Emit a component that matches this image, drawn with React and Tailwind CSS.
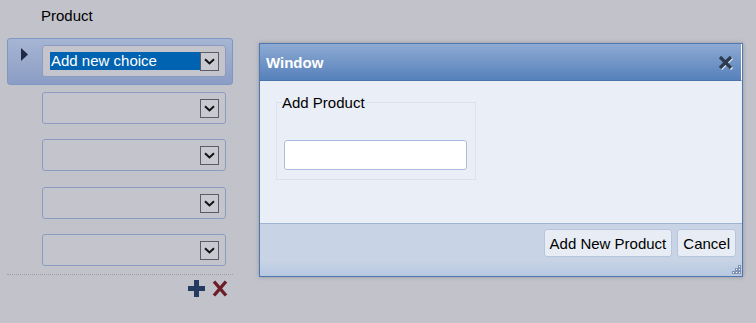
import React from "react";

const Chevron = () => (
  <svg width="11" height="7" viewBox="0 0 11 7">
    <path d="M1 1.2 L5.5 5.4 L10 1.2" fill="none" stroke="#111" strokeWidth="2" />
  </svg>
);

const DropButton = () => (
  <div className="w-[19px] h-[19px] border border-[#5c5c64] bg-[#c9c9d1] flex items-center justify-center shrink-0">
    <Chevron />
  </div>
);

const ChoiceSelect = ({ value }) => (
  <div className="w-[184px] h-[32px] border border-[#8b9cc0] rounded-[3px] bg-[#c4c4cc] flex items-start pt-[6px] pl-[7px] pr-[6px]">
    {value ? (
      <div className="w-[150px] h-[18px] bg-[#0063b1] text-white text-[15px] leading-[18px] pl-[1px]">
        {value}
      </div>
    ) : (
      <div className="flex-1" />
    )}
    <DropButton />
  </div>
);

const Row = ({ selected, value, tall }) => {
  if (selected) {
    return (
      <div className="h-[47px] w-[226px] border border-[#7f97c3] rounded-[3px] bg-[linear-gradient(to_bottom,#a6b5d3,#8b9dc5)] flex items-start pl-[13px] pt-[6px]">
        <svg width="7" height="13" viewBox="0 0 7 13" className="mt-[3px] mr-[14px]">
          <path d="M0 0 L7 6.5 L0 13 Z" fill="#1e2a45" />
        </svg>
        <ChoiceSelect value={value} />
      </div>
    );
  }
  return (
    <div className={tall ? "h-[48px] w-[226px] border border-transparent pl-[34px] pt-[6px]" : "h-[47px] w-[226px] border border-transparent pl-[34px] pt-[6px]"}>
      <ChoiceSelect />
    </div>
  );
};

const App = () => {
  return (
    <div className="relative w-[756px] h-[323px] overflow-hidden bg-[#c2c2ca] font-['Liberation_Sans',Arial,sans-serif] text-[15px] text-black">
      {/* choice list */}
      <div className="pl-[7px]">
        <div className="h-[38px] pl-[34px] pt-[7px] leading-[17px]">Product</div>
        <Row selected value="Add new choice" />
        <Row />
        <Row tall />
        <Row />
        <Row />
        <div className="w-[226px] border-t border-dotted border-[#9a9cb8]" />
        <div className="w-[226px] flex justify-end items-start gap-[7px] pr-[5px] pt-[5px]">
          <svg width="17" height="17" viewBox="0 0 17 17">
            <rect x="6" y="0" width="5" height="17" fill="#253a5f" />
            <rect x="0" y="6" width="17" height="5" fill="#253a5f" />
          </svg>
          <svg width="16" height="17" viewBox="0 0 16 17">
            <path d="M2 1.5 L14 15.5 M14 1.5 L2 15.5" stroke="#6b1d28" strokeWidth="3.4" />
          </svg>
        </div>
      </div>

      {/* window */}
      <div className="absolute left-[259px] top-[43px] w-[484px] h-[234px] border border-[#4f78b2] bg-[#eaeef6] flex flex-col shadow-[0_0_4px_rgba(0,0,0,0.25)]">
        <div className="h-[37px] shrink-0 border-b border-[#4d74aa] bg-[linear-gradient(to_bottom,#8eaad3,#5681bb)] flex items-center justify-between pl-[6px] pr-[7px] border-r border-r-white">
          <span className="text-white font-bold leading-[17px]">Window</span>
          <svg width="16" height="15" viewBox="0 0 16 15">
            <path d="M3 3 L14 14 M14 3 L3 14" stroke="#ffffff" strokeWidth="3" opacity="0.8" />
            <path d="M2 2 L13 13 M13 2 L2 13" stroke="#2d3a50" strokeWidth="3.2" />
          </svg>
        </div>
        <div className="h-[142px] shrink-0 pl-[16px] pt-[13px]">
          <fieldset className="w-[200px] h-[86px] border border-[#dde2ea] px-[7px]">
            <legend className="ml-[-2px] leading-[17px]">Add Product</legend>
            <input
              type="text"
              className="block mt-[29px] w-[183px] h-[30px] border border-[#a9bde0] rounded-[3px] bg-white outline-none"
            />
          </fieldset>
        </div>
        <div className="relative flex-1 border-t border-[#9fb4d2] bg-[linear-gradient(to_bottom,#c8d4e6_70%,#b6c7df)] flex justify-end items-start gap-[5px] pt-[5px] pr-[6px]">
          <button className="h-[28px] px-[5px] border border-[#b6c6de] rounded-[3px] bg-[#e8edf5] leading-[17px]">
            Add New Product
          </button>
          <button className="h-[28px] px-[5px] border border-[#b6c6de] rounded-[3px] bg-[#e8edf5] leading-[17px]">
            Cancel
          </button>
          <svg width="11" height="10" viewBox="0 0 11 10" className="absolute right-[1px] bottom-[1px]">
            {[
              [8, 0],
              [5, 3],
              [8, 3],
              [2, 6],
              [5, 6],
              [8, 6],
            ].map(([x, y], i) => (
              <g key={i}>
                <rect x={x} y={y} width="3" height="3" fill="#7f93b6" />
                <rect x={x + 1} y={y + 1} width="1" height="1" fill="#ffffff" />
              </g>
            ))}
          </svg>
        </div>
      </div>
    </div>
  );
};

export default App;
